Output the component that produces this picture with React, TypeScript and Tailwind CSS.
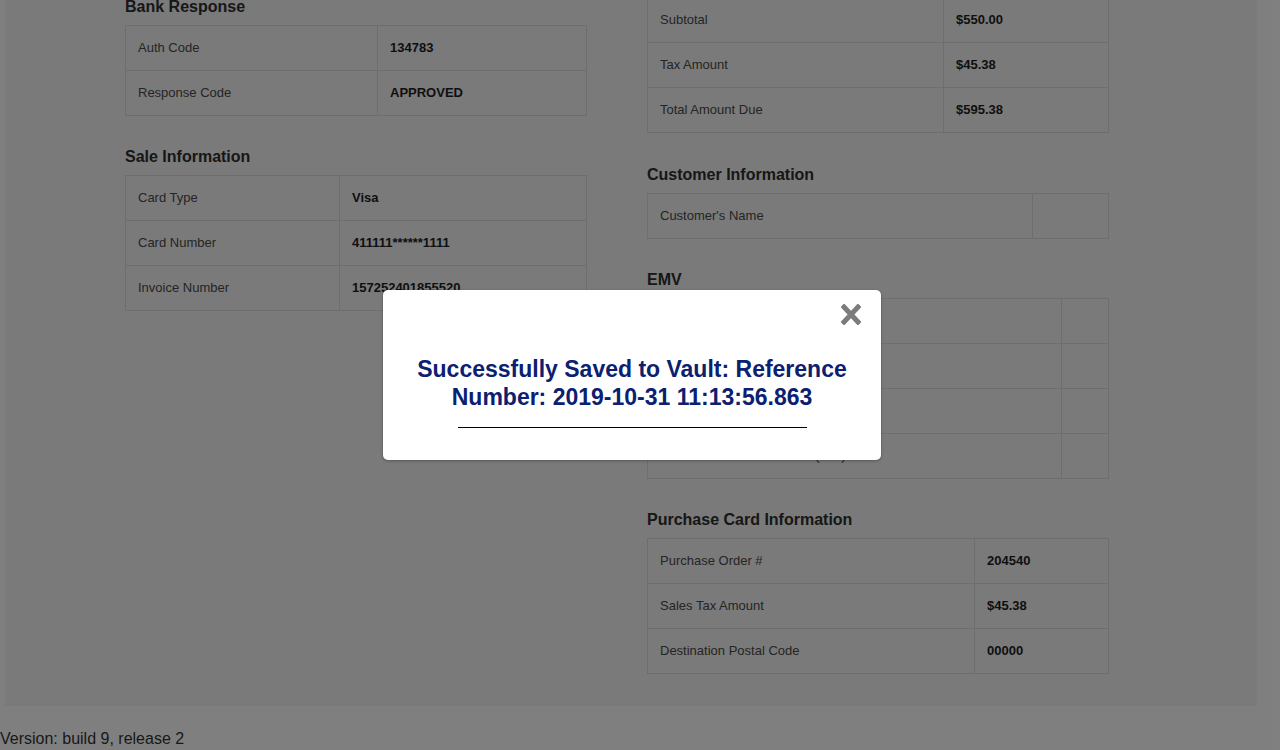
type Row = [string, string];

const bankRows: Row[] = [
  ["Auth Code", "134783"],
  ["Response Code", "APPROVED"],
];

const saleRows: Row[] = [
  ["Card Type", "Visa"],
  ["Card Number", "411111******1111"],
  ["Invoice Number", "157252401855520"],
];

const totalRows: Row[] = [
  ["Subtotal", "$550.00"],
  ["Tax Amount", "$45.38"],
  ["Total Amount Due", "$595.38"],
];

const customerRows: Row[] = [["Customer's Name", ""]];

const emvRows: Row[] = [
  ["Application Identifier (AID)", ""],
  ["Terminal Verification Results (TVR)", ""],
  ["Transaction Status Information (TSI)", ""],
  ["Issuer Authentication Data (IAD)", ""],
];

const purchaseRows: Row[] = [
  ["Purchase Order #", "204540"],
  ["Sales Tax Amount", "$45.38"],
  ["Destination Postal Code", "00000"],
];

function InfoTable({ rows, labelW }: { rows: Row[]; labelW: string }) {
  return (
    <div className="w-[462px] border border-[#dddddd]">
      {rows.map(([label, value], i) => (
        <div key={label} className={i > 0 ? "flex h-[45px] border-t border-[#dddddd]" : "flex h-[44px]"}>
          <div className={`${labelW} flex shrink-0 items-center border-r border-[#dddddd] pl-3 text-[13px] text-[#4a4a4a]`}>
            {label}
          </div>
          <div className="flex flex-1 items-center pl-3 text-[13px] font-bold text-[#1e1e1e]">{value}</div>
        </div>
      ))}
    </div>
  );
}

function Section({ title, rows, labelW, className = "mt-[32px]" }: { title: string; rows: Row[]; labelW: string; className?: string }) {
  return (
    <section className={className}>
      <h3 className="mb-[9px] text-[16px] leading-[18px] font-bold text-[#2e2e2e]">{title}</h3>
      <InfoTable rows={rows} labelW={labelW} />
    </section>
  );
}

export default function App() {
  return (
    <div className="relative h-[750px] overflow-hidden bg-white font-['Liberation_Sans',Arial,sans-serif]">
      <div className="-mt-[3px] ml-[5px] flex w-[1252px] gap-[60px] bg-[#f4f4f4] pb-[32px] pl-[120px]">
        <div className="w-[462px] pt-[1px]">
          <Section className="" title="Bank Response" rows={bankRows} labelW="w-[252px]" />
          <Section title="Sale Information" rows={saleRows} labelW="w-[214px]" />
        </div>
        <div className="w-[462px]">
          <InfoTable rows={totalRows} labelW="w-[296px]" />
          <Section className="mt-[33px]" title="Customer Information" rows={customerRows} labelW="w-[385px]" />
          <Section title="EMV" rows={emvRows} labelW="w-[414px]" />
          <Section title="Purchase Card Information" rows={purchaseRows} labelW="w-[327px]" />
        </div>
      </div>
      <p className="mt-[24px] text-[16px] leading-[18px] text-[#333333]">Version: build 9, release 2</p>

      <div className="absolute inset-0 bg-black/50" />

      <div className="absolute left-[383px] top-[290px] h-[170px] w-[498px] rounded-[5px] bg-white shadow-[0_1px_3px_rgba(0,0,0,0.3)]">
        <button className="absolute right-[20px] top-[14px]" aria-label="Close">
          <svg width="20" height="21" viewBox="0 0 20 21">
            <path d="M3 3 L17 18 M17 3 L3 18" stroke="#7c7c7c" strokeWidth="5" strokeLinecap="square" fill="none" />
          </svg>
        </button>
        <h2 className="px-5 pt-[65px] text-center text-[23px] leading-[28px] font-bold text-[#0b2071]">
          Successfully Saved to Vault: Reference Number: 2019-10-31 11:13:56.863
        </h2>
        <hr className="mx-auto mt-[16px] h-px w-[349px] border-0 bg-black" />
      </div>
    </div>
  );
}
